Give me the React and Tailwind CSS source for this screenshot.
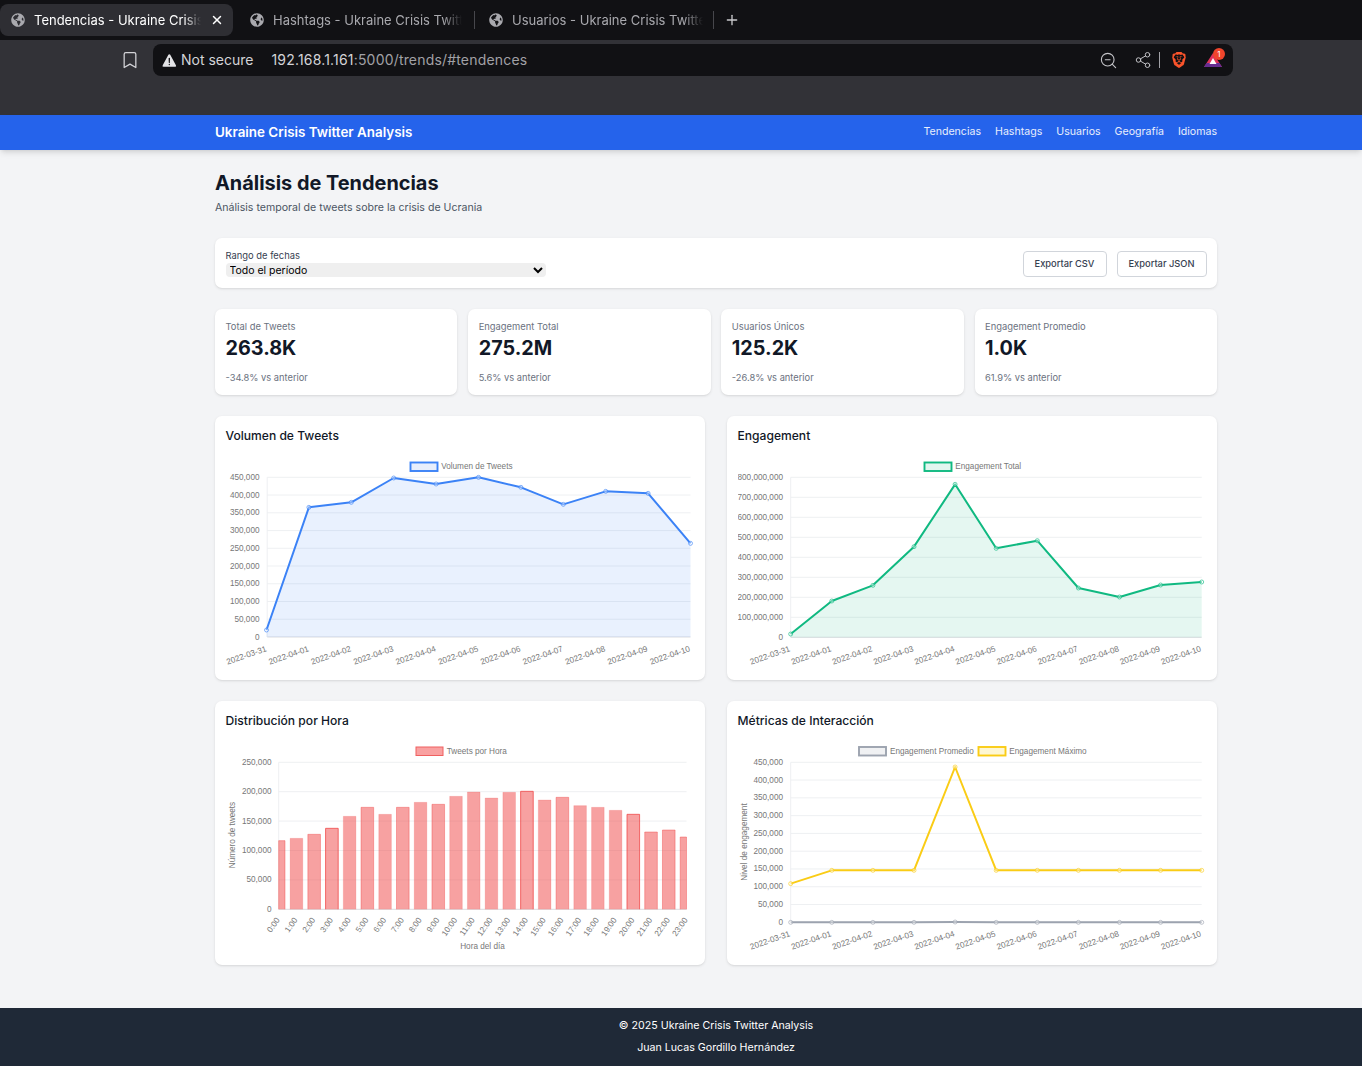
import React from "react";
import { Bookmark, Plus, Share2, X, ZoomOut } from "lucide-react";
import { FaGlobeAmericas } from "react-icons/fa";
import { SiBrave } from "react-icons/si";
import { IoWarning } from "react-icons/io5";

const dates = ["2022-03-31","2022-04-01","2022-04-02","2022-04-03","2022-04-04","2022-04-05","2022-04-06","2022-04-07","2022-04-08","2022-04-09","2022-04-10"];
const GRID = "#eceef0";
const LABEL = "#777777";
const chartFont = { fontFamily: '"Liberation Sans", Arial, sans-serif', fontSize: 8.2, fill: LABEL };

function Legend({ x, y, label, stroke, fill, tx, sw = 1.9 }) {
  return (
    <g>
      <rect x={x} y={y} width="27" height="8.5" fill={fill} stroke={stroke} strokeWidth={sw} />
      <text x={tx} y={y + 6.5} style={chartFont}>{label}</text>
    </g>
  );
}

function YAxis({ labels, endX, axisX, rightX, top, bottom }) {
  const n = labels.length - 1;
  return (
    <g>
      {labels.map((l, i) => {
        const y = bottom - ((bottom - top) * i) / n;
        return (
          <g key={l}>
            <line x1={axisX} x2={rightX} y1={y} y2={y} stroke={i === 0 ? "#d6d8dc" : GRID} strokeWidth="0.9" />
            <text x={endX} y={y + 2.5} textAnchor="end" style={chartFont}>{l}</text>
          </g>
        );
      })}
      <line x1={axisX} x2={axisX} y1={top} y2={bottom} stroke={GRID} strokeWidth="0.9" />
    </g>
  );
}

function DateTicks({ left, right, y }) {
  const step = (right - left) / 10;
  return (
    <g>
      {dates.map((d, i) => {
        const x = left + step * i;
        return (
          <text key={d} x={x} y={y} textAnchor="end" transform={`rotate(-19 ${x} ${y})`} style={chartFont}>{d}</text>
        );
      })}
    </g>
  );
}

function Series({ left, right, ys, color, bottom, area }) {
  const step = (right - left) / 10;
  const pts = ys.map((y, i) => [left + step * i, y]);
  const line = pts.map((p) => p.join(",")).join(" ");
  return (
    <g>
      {area && <polygon points={`${left},${bottom} ${line} ${right},${bottom}`} fill={color} fillOpacity="0.11" />}
      <polyline points={line} fill="none" stroke={color} strokeWidth="2" strokeLinejoin="round" />
      {pts.map((p, i) => (
        <circle key={i} cx={p[0]} cy={p[1]} r="2" fill="#ffffff" fillOpacity="0.35" stroke={color} strokeOpacity="0.7" strokeWidth="0.9" />
      ))}
    </g>
  );
}

const z1 = (v) => 415 + v / 3;
const z2 = (v) => 700 + v / 3;

function VolumeChart() {
  const ys = [645,277,262,189,207,187,217,268,229,235,385].map(z1);
  return (
    <svg className="block w-[469px] h-[223.5px]" viewBox="225.5 446 469 223.5">
      <Legend x={410} y={462.5} label="Volumen de Tweets" stroke="#3b82f6" fill="#e7eefc" tx={440.7} />
      <YAxis labels={["0","50,000","100,000","150,000","200,000","250,000","300,000","350,000","400,000","450,000"]} endX={259} axisX={266.7} rightX={690} top={477.3} bottom={637} />
      <Series left={266} right={690} ys={ys} color="#3b82f6" bottom={637} area />
      <DateTicks left={266.5} right={690} y={651} />
    </svg>
  );
}

function EngagementChart() {
  const ys = [657,558,511,395,208,400,377,519,546,510,501].map(z1);
  return (
    <svg className="block w-[469px] h-[223.5px]" viewBox="738 446 469 223.5">
      <Legend x={924.5} y={462.5} label="Engagement Total" stroke="#10b981" fill="#e3f6ef" tx={955.3} />
      <YAxis labels={["0","100,000,000","200,000,000","300,000,000","400,000,000","500,000,000","600,000,000","700,000,000","800,000,000"]} endX={783} axisX={790.7} rightX={1201.7} top={477.3} bottom={637.3} />
      <Series left={790.7} right={1201.7} ys={ys} color="#10b981" bottom={637.3} area />
      <DateTicks left={790.7} right={1201.7} y={651} />
    </svg>
  );
}

const barTops = [422,415,403,385,349,322,343,322,307,313,289,276,294,277,274,300,292,317,322,331,343,396,390,411];
const strong = [3, 14, 20];
const medium = [2, 5, 7, 9, 16, 0, 21, 22, 23];

function HourChart() {
  const left = 278.2;
  const right = 686;
  const step = (right - left) / 23;
  const bottom = 909.3;
  return (
    <svg className="block w-[469px] h-[223.5px]" viewBox="225.5 731 469 223.5">
      <Legend x={415.5} y={747} label="Tweets por Hora" stroke="#ef6060" fill="#f9a1a1" tx={446.3} sw={1} />
      <YAxis labels={["0","50,000","100,000","150,000","200,000","250,000"]} endX={271} axisX={left} rightX={right} top={762.3} bottom={bottom} />
      {barTops.map((t, i) => {
        const cx = left + step * i;
        const x0 = Math.max(left, cx - 6.3);
        const x1 = Math.min(right, cx + 6.3);
        const y = z2(t);
        const op = strong.includes(i) ? 0.85 : medium.includes(i) ? 0.45 : 0.2;
        return (
          <g key={i}>
            <rect x={x0} y={y} width={x1 - x0} height={bottom - y} fill="#ef4444" fillOpacity="0.5" />
            <path d={`M${x0} ${bottom}V${y}H${x1}V${bottom}`} fill="none" stroke="#ef4444" strokeOpacity={op} strokeWidth="0.9" />
          </g>
        );
      })}
      {barTops.map((_, i) => {
        const x = left + step * i + 1.5;
        return (
          <text key={i} x={x} y={920} textAnchor="end" transform={`rotate(-55 ${x} 920)`} style={chartFont}>{`${i}:00`}</text>
        );
      })}
      <text x={482} y={949} textAnchor="middle" style={chartFont}>Hora del día</text>
      <text x={234} y={835} textAnchor="middle" transform="rotate(-90 234 835)" style={chartFont}>Número de tweets</text>
    </svg>
  );
}

function InteractionChart() {
  const yellow = [551,511,511,511,201,511,511,511,511,511,511].map(z2);
  const gray = [667,667,667,667,666,667,667,667,667,667,667].map(z2);
  return (
    <svg className="block w-[469px] h-[223.5px]" viewBox="738 731 469 223.5">
      <Legend x={859} y={747} label="Engagement Promedio" stroke="#9ca3af" fill="#f0f1f3" tx={890} />
      <Legend x={978.5} y={747} label="Engagement Máximo" stroke="#facc15" fill="#fef7d3" tx={1009.3} />
      <YAxis labels={["0","50,000","100,000","150,000","200,000","250,000","300,000","350,000","400,000","450,000"]} endX={783} axisX={790.7} rightX={1201.7} top={762.3} bottom={922.3} />
      <Series left={790.7} right={1201.7} ys={gray} color="#9ca3af" bottom={922.3} />
      <Series left={790.7} right={1201.7} ys={yellow} color="#facc15" bottom={922.3} />
      <DateTicks left={790.7} right={1201.7} y={936} />
      <text x={747} y={842} textAnchor="middle" transform="rotate(-90 747 842)" style={chartFont}>Nivel de engagement</text>
    </svg>
  );
}

function Tab({ label, active, width, pad, textW }) {
  return (
    <div className={active ? "flex items-center shrink-0 h-8 rounded-lg bg-[#2e2e33] text-white" : "flex items-center shrink-0 h-8 text-[#a9a9ae]"} style={{ width, paddingLeft: pad }}>
      <FaGlobeAmericas className="w-[14px] h-[14px] text-[#a9a9ae] shrink-0" />
      <span className="ml-[9px] pt-px overflow-hidden whitespace-nowrap text-[13px] [mask-image:linear-gradient(to_right,black_90%,transparent)]" style={{ width: textW }}>{label}</span>
      {active && <X className="ml-[9px] w-[14px] h-[14px] text-white" strokeWidth={2.5} />}
    </div>
  );
}

function BrowserChrome() {
  return (
    <div className="font-['Inter',sans-serif]">
      <div className="flex items-center h-10 bg-[#111114]">
        <Tab label="Tendencias - Ukraine Crisis Twitter" active width={233} pad={11} textW={167} />
        <Tab label="Hashtags - Ukraine Crisis Twitter Analysis" width={241} pad={17} textW={189} />
        <div className="w-px h-[18px] bg-[#47474c]" />
        <Tab label="Usuarios - Ukraine Crisis Twitter Analysis" width={238} pad={14} textW={191} />
        <div className="w-px h-[18px] bg-[#47474c]" />
        <Plus className="ml-[10px] w-[16px] h-[16px] text-[#c9c9cc]" />
      </div>
      <div className="flex items-start h-[75px] bg-[#323237] pt-1 pl-[120px]">
        <Bookmark className="mt-[6px] w-5 h-5 text-[#d4d4d8]" strokeWidth={1.5} />
        <div className="ml-[13px] flex items-center w-[1080px] h-8 rounded-lg bg-[#111114] pl-2 pr-[11px]">
          <IoWarning className="w-[17px] h-[17px] text-[#e4e4e7] shrink-0" />
          <span className="ml-[3px] text-sm text-[#d4d4d8]">Not secure</span>
          <span className="ml-[18px] text-sm text-[#d4d4d8] tracking-[0.18px]">192.168.1.161<span className="text-[#a1a1a6]">:5000/trends/#tendences</span></span>
          <div className="ml-auto flex items-center">
            <ZoomOut className="w-[19px] h-[19px] text-[#c4c4c8]" strokeWidth={1.4} />
            <Share2 className="ml-[16px] w-[18px] h-[18px] text-[#c4c4c8]" strokeWidth={1.3} />
            <div className="ml-[7px] w-px h-4 bg-[#a1a1a6]" />
            <SiBrave className="ml-[11px] w-4 h-[18px] text-[#fb542b]" />
            <div className="relative ml-[17px] w-[18px] h-4">
              <svg viewBox="0 0 18 16" className="w-[18px] h-4">
                <polygon points="9,1 0,15 18,15" fill="#e0335a" />
                <polygon points="0,15 18,15 15.5,11 2.5,11" fill="#662d91" />
                <polygon points="9,6 5.5,12 12.5,12" fill="#ffffff" />
              </svg>
              <span className="absolute -top-[4px] -right-[3px] flex items-center justify-center w-3 h-3 rounded-full bg-[#f0452c] text-[8px] text-white">1</span>
            </div>
          </div>
        </div>
      </div>
    </div>
  );
}

function Stat({ label, value, delta }) {
  return (
    <div className="flex-1 h-[86px] rounded-[7px] bg-white px-[10.5px] pt-[11px] shadow-sm">
      <p className="text-[9.4px] leading-[14px] text-[#6b7280]">{label}</p>
      <p className="text-[19.8px] leading-[28px] font-bold text-[#111827]">{value}</p>
      <p className="mt-[9px] text-[9.3px] leading-[14px] text-[#6b7280]">{delta}</p>
    </div>
  );
}

function ChartCard({ title, children }) {
  return (
    <div className="flex-1 h-[264px] rounded-[7px] bg-white p-[10.5px] shadow-sm">
      <h3 className="-mt-px mb-px text-[12.1px] leading-[19px] font-medium text-[#111827]">{title}</h3>
      {children}
    </div>
  );
}

export default function App() {
  return (
    <div className="w-[1362px] h-[1066px] overflow-hidden flex flex-col bg-[#f3f4f6] font-['Inter',sans-serif]">
      <BrowserChrome />
      <nav className="flex items-center justify-between h-[35px] shrink-0 bg-[#2563eb] pl-[215px] pr-[145px] shadow-md">
        <span className="text-[13.4px] font-semibold text-white">Ukraine Crisis Twitter Analysis</span>
        <div className="flex items-center gap-[14px] pb-[2px] text-[10.6px] text-[#e8eefc]">
          <span>Tendencias</span>
          <span>Hashtags</span>
          <span>Usuarios</span>
          <span>Geografía</span>
          <span>Idiomas</span>
        </div>
      </nav>
      <main className="flex-1 w-[1002px] ml-[215px] pt-[21px]">
        <h1 className="text-[19.9px] leading-[24px] font-bold text-[#111827]">Análisis de Tendencias</h1>
        <p className="mt-[6px] text-[10.6px] leading-[14px] text-[#4b5563]">Análisis temporal de tweets sobre la crisis de Ucrania</p>
        <div className="mt-[23px] flex items-center justify-between h-[50px] rounded-[7px] bg-white px-[10.5px] shadow-sm">
          <div className="flex flex-col">
            <label className="text-[9.4px] leading-[14px] text-[#374151]">Rango de fechas</label>
            <select className="w-[320px] h-[14px] rounded-[4px] bg-[#efefef] text-[10.5px] leading-[14px] text-black">
              <option>Todo el período</option>
            </select>
          </div>
          <div className="flex gap-[10px] mt-[2px]">
            <button className="h-[26px] w-[84px] rounded-[4px] border border-[#d1d5db] bg-white text-[9.3px] font-medium text-[#374151]">Exportar CSV</button>
            <button className="h-[26px] w-[90px] rounded-[4px] border border-[#d1d5db] bg-white text-[9.3px] font-medium text-[#374151]">Exportar JSON</button>
          </div>
        </div>
        <div className="mt-[21px] flex gap-[10.7px]">
          <Stat label="Total de Tweets" value="263.8K" delta="-34.8% vs anterior" />
          <Stat label="Engagement Total" value="275.2M" delta="5.6% vs anterior" />
          <Stat label="Usuarios Únicos" value="125.2K" delta="-26.8% vs anterior" />
          <Stat label="Engagement Promedio" value="1.0K" delta="61.9% vs anterior" />
        </div>
        <div className="mt-[21px] flex gap-[22px]">
          <ChartCard title="Volumen de Tweets"><VolumeChart /></ChartCard>
          <ChartCard title="Engagement"><EngagementChart /></ChartCard>
        </div>
        <div className="mt-[21px] flex gap-[22px]">
          <ChartCard title="Distribución por Hora"><HourChart /></ChartCard>
          <ChartCard title="Métricas de Interacción"><InteractionChart /></ChartCard>
        </div>
      </main>
      <footer className="h-[58px] shrink-0 bg-[#1f2937] pl-[70px] pt-[11px] text-center text-[10.65px] leading-[14px] text-white">
        <p>© 2025 Ukraine Crisis Twitter Analysis</p>
        <p className="mt-[8px]">Juan Lucas Gordillo Hernández</p>
      </footer>
    </div>
  );
}
